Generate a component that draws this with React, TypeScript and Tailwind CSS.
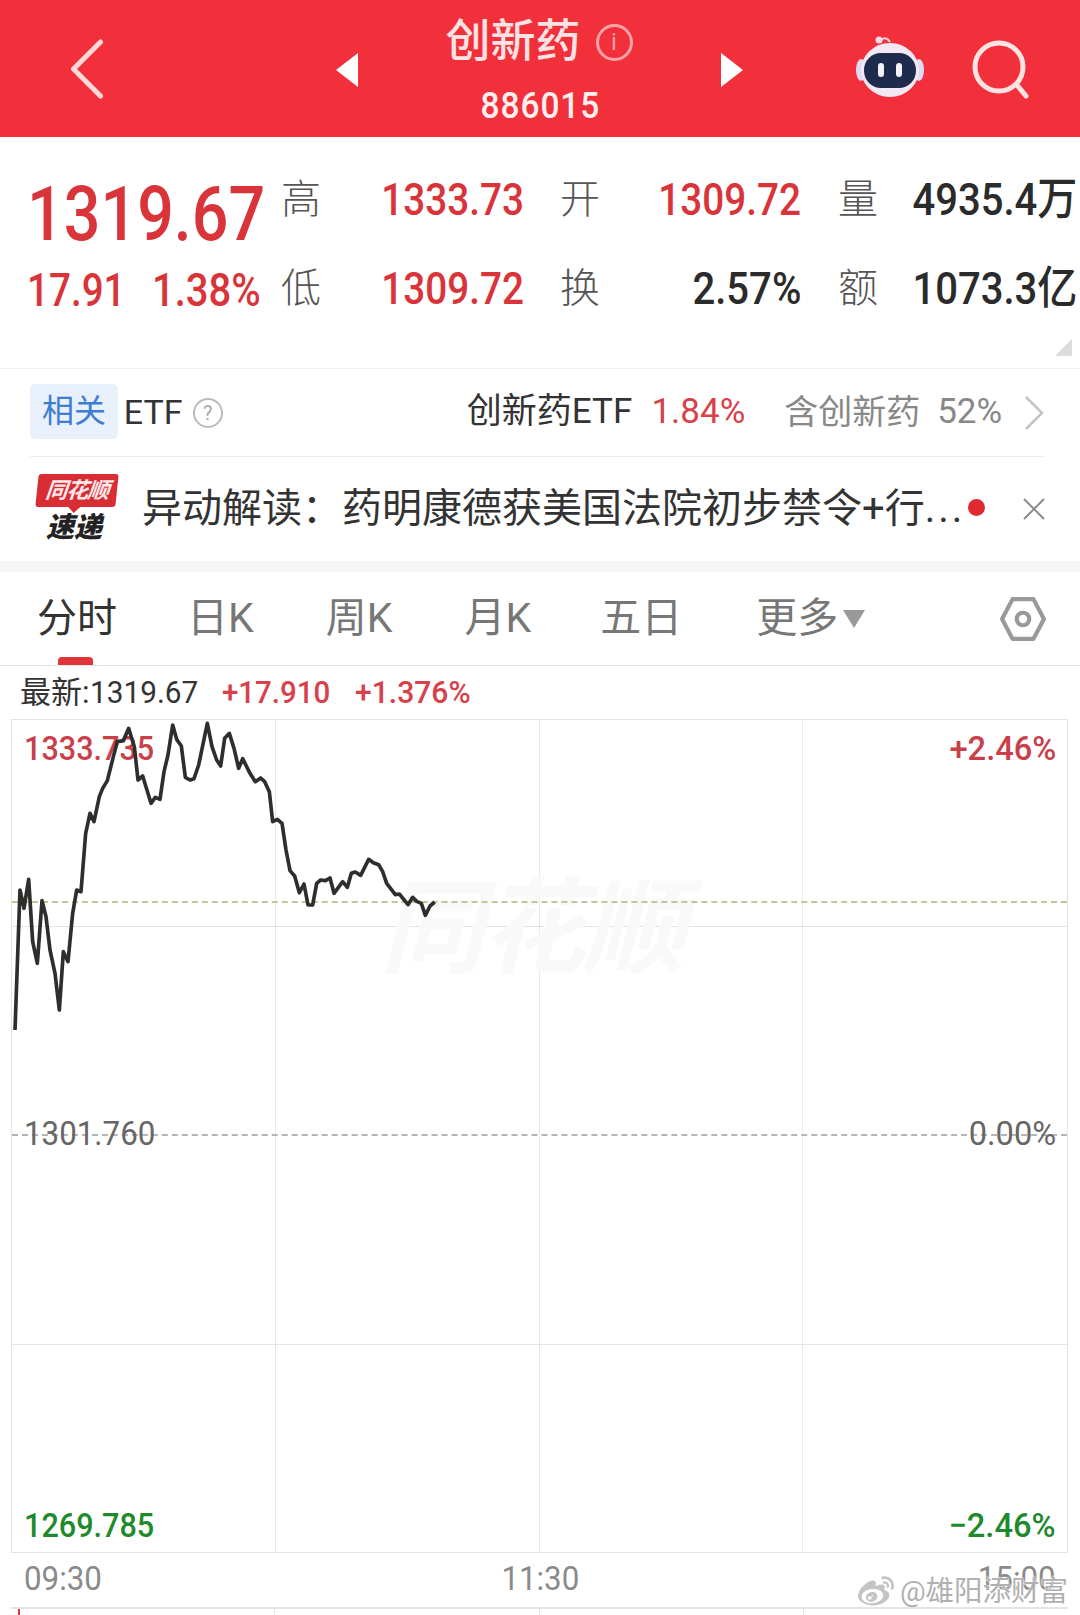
import React from "react";
import { FaWeibo } from "react-icons/fa";

const pts = "45,990 60,570 72,625 86,538 98,725 112,790 126,602 138,650 150,750 165,820 178,930 190,755 204,785 218,640 230,570 243,575 257,400 270,340 282,365 298,290 308,265 322,242 340,170 352,125 370,122 386,85 403,140 414,240 428,228 453,310 466,292 480,298 492,215 504,165 518,75 530,118 544,138 556,232 570,240 582,236 596,195 622,70 636,140 650,180 662,198 674,115 688,100 702,145 716,205 728,176 750,220 766,245 782,234 794,245 808,275 818,365 832,358 846,370 858,450 870,512 884,528 898,578 912,552 924,615 938,615 950,550 962,540 976,542 990,534 1002,580 1028,545 1042,562 1054,520 1066,516 1082,526 1106,478 1120,488 1136,494 1148,515 1160,550 1186,584 1198,582 1224,614 1238,592 1250,604 1264,610 1276,646 1290,618 1304,606";

function Quote({ label, value, width, gap, color }: { label: string; value: string; width: string; gap: string; color: string }) {
  return (
    <>
      <span className={`text-[40px] leading-[48px] font-light text-[#555] ${gap}`}>{label}</span>
      <span className={`${width} flex justify-end`}>
        <span className={`inline-block origin-right whitespace-nowrap text-[45px] font-medium leading-[48px] ${color}`}>{value}</span>
      </span>
    </>
  );
}

function Robot() {
  return (
    <svg viewBox="0 0 70 64" className="h-[64px] w-[70px]">
      <path d="M26 9 C25 3 32 3 35 8" fill="none" stroke="#f5d5e0" strokeWidth="2" />
      <circle cx="24" cy="6" r="3.5" fill="#f9dbe3" />
      <ellipse cx="6" cy="36" rx="5" ry="11" fill="#dfd9f4" />
      <ellipse cx="64" cy="36" rx="5" ry="11" fill="#dfd9f4" />
      <ellipse cx="35" cy="36" rx="29" ry="27" fill="#f3e9f5" />
      <rect x="9" y="19" width="52" height="35" rx="17" fill="#1f2b4d" />
      <rect x="23" y="29" width="6" height="14" rx="3" fill="#f4f4f8" />
      <rect x="41" y="29" width="6" height="14" rx="3" fill="#f4f4f8" />
    </svg>
  );
}

function Logo() {
  return (
    <div className="flex h-[70px] w-[84px] flex-col items-center">
      <div className="relative flex h-[33px] w-[80px] -skew-x-6 items-center justify-center rounded-[3px] bg-[#d92d34]">
        <span className="text-[22px] font-bold italic leading-none tracking-[-1px] text-[#fde9e9]">同花顺</span>
        <span className="absolute -bottom-[6px] left-[33px] h-0 w-0 border-x-[6px] border-t-[6px] border-x-transparent border-t-[#d92d34]" />
      </div>
      <span className="mt-[5px] -ml-[6px] text-[28px] font-black italic leading-[32px] text-[#222]">速递</span>
    </div>
  );
}

function GridRow({ className }: { className: string }) {
  return (
    <div className={`grid grid-cols-4 ${className}`}>
      <div className="border-r border-[#e8e8e8]" />
      <div className="border-r border-[#e8e8e8]" />
      <div className="border-r border-[#e8e8e8]" />
      <div />
    </div>
  );
}

const RED = "text-[#d8343a] scale-x-[0.86]";
const INK = "text-[#2b2b2b] scale-x-[0.89]";

export default function App() {
  return (
    <div className="relative h-[1615px] w-[1080px] overflow-hidden bg-white font-['Roboto','Noto_Sans_CJK_SC',sans-serif]">
      {/* header */}
      <header className="relative flex h-[137px] items-center bg-[#f2303c] text-white">
        <svg viewBox="0 0 36 60" className="ml-[68px] h-[60px] w-[37px]" fill="none" stroke="#ffd9d9" strokeWidth="5" strokeLinecap="round" strokeLinejoin="round">
          <path d="M32 3 L5 30 L32 57" />
        </svg>
        <svg viewBox="0 0 24 36" className="ml-[230px] mt-[2px] h-[36px] w-[24px]"><path d="M23 1 L1 18 L23 35 Z" fill="#fff" /></svg>
        <div className="flex w-[360px] flex-col items-center pt-[5px]">
          <div className="flex items-center">
            <span className="text-[45px] font-medium leading-[56px] text-[#fbe3e3]">创新药</span>
            <span className="ml-[15px] flex h-[37px] w-[37px] items-center justify-center rounded-full border-[3px] border-[#f9a3a8] text-[24px] leading-none text-[#f9a3a8]">i</span>
          </div>
          <span className="mt-[14px] ml-[2px] origin-center scale-x-[0.93] text-[36px] font-medium leading-[44px] tracking-[1px] text-[#fff0f0]">886015</span>
        </div>
        <svg viewBox="0 0 24 36" className="ml-[1px] mt-[2px] h-[36px] w-[24px]"><path d="M1 1 L23 18 L1 35 Z" fill="#fff" /></svg>
        <div className="ml-[111px] mt-[-6px]"><Robot /></div>
        <svg viewBox="0 0 60 60" className="ml-[47px] mt-[2px] h-[60px] w-[60px]" fill="none" stroke="#ffe3e3" strokeWidth="5" strokeLinecap="round">
          <circle cx="27" cy="27" r="24" />
          <path d="M45 45 L54 56" />
        </svg>
      </header>

      {/* quote */}
      <section className="relative flex h-[232px] border-b border-[#f0f0f0]">
        <div className="ml-[27px] w-[254px]">
          <div className="mt-[32px] inline-block origin-left scale-x-[0.85] whitespace-nowrap text-[76px] font-medium leading-[90px] text-[#d8343a]">1319.67</div>
          <div className="mt-[7px] flex text-[46px] font-medium leading-[48px] text-[#d8343a]">
            <span className="inline-block w-[125px] origin-left scale-x-[0.84]">17.91</span>
            <span className="inline-block origin-left scale-x-[0.87]">1.38%</span>
          </div>
        </div>
        <div className="mt-[39px] flex flex-col gap-[41px]">
          <div className="flex items-center">
            <Quote label="高" value="1333.73" width="w-[203px]" gap="" color={RED} />
            <Quote label="开" value="1309.72" width="w-[201px]" gap="ml-[36px]" color={RED} />
            <Quote label="量" value="4935.4万" width="w-[199px]" gap="ml-[37px]" color={INK} />
          </div>
          <div className="flex items-center">
            <Quote label="低" value="1309.72" width="w-[203px]" gap="" color={RED} />
            <Quote label="换" value="2.57%" width="w-[201px]" gap="ml-[36px]" color={INK} />
            <Quote label="额" value="1073.3亿" width="w-[199px]" gap="ml-[37px]" color={INK} />
          </div>
        </div>
        <span className="absolute bottom-[12px] right-[8px] h-0 w-0 border-b-[17px] border-l-[17px] border-b-[#dcdcdc] border-l-transparent" />
      </section>

      {/* ETF row */}
      <section className="ml-[30px] mr-[36px] flex h-[88px] items-center border-b border-[#eeeeee] text-[34px]">
        <span className="-mt-[3px] flex h-[55px] w-[88px] items-center justify-center rounded-[5px] bg-[#e8f0fb] text-[32px] text-[#3f7dd3]">相关</span>
        <span className="ml-[6px] w-[58px] text-[#333]">ETF</span>
        <span className="ml-[11px] flex h-[30px] w-[30px] items-center justify-center rounded-full border-2 border-[#bbb] text-[20px] leading-none text-[#aaa]">?</span>
        <span className="ml-[244px] w-[185px] whitespace-nowrap text-[35px] text-[#333]">创新药ETF</span>
        <span className="inline-block w-[133px] text-[35px] text-[#d8404a]">1.84%</span>
        <span className="w-[136px] whitespace-nowrap text-[#888]">含创新药</span>
        <span className="ml-[17px] inline-block w-[87px] text-[35px] text-[#888]">52%</span>
        <svg viewBox="0 0 20 36" className="h-[36px] w-[20px] shrink-0" fill="none" stroke="#c4c4c4" strokeWidth="2.5"><path d="M2 2 L18 18 L2 34" /></svg>
      </section>

      {/* notice */}
      <section className="flex h-[104px] items-center pl-[35px]">
        <Logo />
        <span className="ml-[23px] w-[826px] whitespace-nowrap text-[40px] leading-none text-[#333]">异动解读：药明康德获美国法院初步禁令+行<span className="tracking-[3px]">...</span></span>
        <span className="-mt-[3px] h-[17px] w-[17px] rounded-full bg-[#e02a2f]" />
        <svg viewBox="0 0 24 24" className="ml-[37px] h-[24px] w-[24px]" fill="none" stroke="#8c8c8c" strokeWidth="2"><path d="M2 2 L22 22 M22 2 L2 22" /></svg>
      </section>

      <div className="h-[11px] bg-[#f5f5f5]" />

      {/* tabs */}
      <nav className="relative flex h-[94px] items-center border-b border-[#e6e6e6] text-[41px] leading-none text-[#777]">
        <span className="ml-[37px] text-[40px] text-[#333]">分时</span>
        <span className="ml-[70px]">日K</span>
        <span className="ml-[72px]">周K</span>
        <span className="ml-[72px]">月K</span>
        <span className="ml-[69px]">五日</span>
        <span className="ml-[74px]">更多</span>
        <span className="ml-[5px] h-0 w-0 border-x-[11px] border-t-[18px] border-x-transparent border-t-[#999]" />
        <svg viewBox="0 0 44 44" className="ml-[135px] h-[46px] w-[46px]" fill="none" stroke="#999" strokeWidth="4" strokeLinejoin="round">
          <path d="M12 3 L32 3 L42 22 L32 41 L12 41 L2 22 Z" />
          <circle cx="22" cy="22" r="6" />
        </svg>
        <span className="absolute bottom-[0px] left-[58px] h-[8px] w-[35px] rounded-t-[4px] bg-[#e0343a]" />
      </nav>

      {/* latest */}
      <div className="flex h-[53px] items-center pl-[20px] text-[31px] leading-none">
        <span className="w-[202px] text-[#333]"><span>最新:</span><span className="inline-block origin-left scale-x-[0.96]">1319.67</span></span>
        <span className="inline-block w-[133px] origin-left scale-x-[0.95] whitespace-nowrap font-medium text-[#d8404a]">+17.910</span>
        <span className="inline-block origin-left scale-x-[0.97] whitespace-nowrap font-medium text-[#d8404a]">+1.376%</span>
      </div>

      {/* chart */}
      <div className="relative ml-[11px] mr-[12px] h-[834px] border border-[#e4e4e4]">
        <GridRow className="h-[207px] border-b border-[#e4e4e4]" />
        <GridRow className="h-[209px] border-b-2 border-dashed border-b-[#b5b5b5]" />
        <GridRow className="h-[209px] border-b border-[#e4e4e4]" />
        <GridRow className="h-[207px]" />

        <span className="absolute left-[368px] top-[158px] whitespace-nowrap text-[104px] font-bold italic leading-none tracking-[-3px] text-[#f9f9f9]">同花顺</span>
        <div className="absolute left-0 right-0 top-[181px] border-t-2 border-dashed border-[#c5c59b]" />

        <span className="absolute left-[12px] top-[9px] text-[34px] font-medium leading-[38px] text-[#c9404a]">
          <span className="inline-block origin-left scale-x-[0.9]">1333.735</span>
        </span>
        <span className="absolute right-[11px] top-[9px] text-[34px] font-medium leading-[38px] text-[#c9404a]">
          <span className="inline-block origin-right scale-x-[0.96]">+2.46%</span>
        </span>
        <span className="absolute left-[12px] top-[394px] text-[34px] leading-[38px] text-[#666]">
          <span className="inline-block origin-left scale-x-[0.92]">1301.760</span>
        </span>
        <span className="absolute right-[11px] top-[394px] text-[34px] leading-[38px] text-[#666]">
          <span className="inline-block origin-right scale-x-[0.96]">0.00%</span>
        </span>
        <span className="absolute bottom-[8px] left-[12px] text-[34px] font-medium leading-[38px] text-[#1f8a2c]">
          <span className="inline-block origin-left scale-x-[0.9]">1269.785</span>
        </span>
        <span className="absolute bottom-[8px] right-[11px] text-[34px] font-medium leading-[38px] text-[#1f8a2c]">
          <span className="inline-block origin-right scale-x-[0.96]">−2.46%</span>
        </span>

        <svg viewBox="0 0 1500 1020" className="absolute left-[-12px] top-[-20px] h-[340px] w-[500px]" fill="none">
          <polyline points={pts} stroke="#2e2e2e" strokeWidth="11" strokeLinejoin="round" />
        </svg>
      </div>

      {/* time axis */}
      <div className="relative mx-[24px] flex h-[54px] items-center justify-between pb-[4px] text-[34px] leading-none text-[#8a8a8a]">
        <span className="inline-block origin-left scale-x-[0.92]">09:30</span>
        <span className="inline-block origin-center scale-x-[0.92]">11:30</span>
        <span className="inline-block origin-right scale-x-[0.92]">15:00</span>
        <div className="absolute right-[-12px] top-[21px] flex items-center gap-[4px] text-[#b0b0b0] [text-shadow:0_0_2px_#fff,0_0_2px_#fff]">
          <FaWeibo className="h-[36px] w-[40px] text-[#c4c4c4]" />
          <span className="text-[28.5px] leading-none">@雄阳添财富</span>
        </div>
      </div>

      {/* next chart top */}
      <div className="relative ml-[11px] mr-[12px] h-[10px] border-t-2 border-[#e4e4e4]">
        <GridRow className="h-full" />
        <span className="absolute left-[7px] top-0 h-[10px] w-[2px] bg-[#d8343a]" />
      </div>
    </div>
  );
}
